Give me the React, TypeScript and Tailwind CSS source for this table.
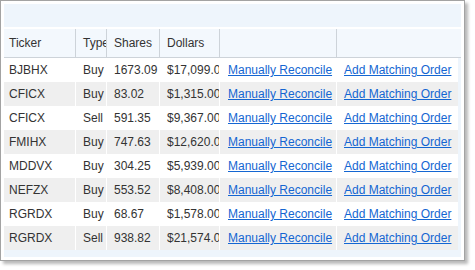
const rows = [
  { ticker: 'BJBHX', type: 'Buy', shares: '1673.09', dollars: '$17,099.00' },
  { ticker: 'CFICX', type: 'Buy', shares: '83.02', dollars: '$1,315.00' },
  { ticker: 'CFICX', type: 'Sell', shares: '591.35', dollars: '$9,367.00' },
  { ticker: 'FMIHX', type: 'Buy', shares: '747.63', dollars: '$12,620.00' },
  { ticker: 'MDDVX', type: 'Buy', shares: '304.25', dollars: '$5,939.00' },
  { ticker: 'NEFZX', type: 'Buy', shares: '553.52', dollars: '$8,408.00' },
  { ticker: 'RGRDX', type: 'Buy', shares: '68.67', dollars: '$1,578.00' },
  { ticker: 'RGRDX', type: 'Sell', shares: '938.82', dollars: '$21,574.00' },
]

const App = () => {
  return (
    <div className="w-[475px] h-[270px] bg-white font-['Liberation_Sans',Arial,sans-serif] text-[12px] text-[#333]">
      <div className="w-[465px] h-[261px] border border-[#a3a3a3] bg-white p-[3px] shadow-[3px_3px_3px_rgba(0,0,0,0.28)]">
        <div className="h-full bg-[#eef5fc] flex flex-col">
          <div className="h-[25px] border-b-2 border-white shrink-0"></div>

          <div className="flex h-[29px] bg-[#f3f8fd] border-b border-[#cdd3d9] shrink-0">
            <div className="w-[72px] pl-[5px] border-r border-[#cdd3d9] flex items-center">Ticker</div>
            <div className="w-[31px] pl-[7px] border-r border-[#cdd3d9] flex items-center overflow-hidden whitespace-nowrap">Type</div>
            <div className="w-[53px] pl-[7px] border-r border-[#cdd3d9] flex items-center">Shares</div>
            <div className="w-[60px] pl-[7px] border-r border-[#cdd3d9] flex items-center">Dollars</div>
            <div className="w-[117px] border-r border-[#cdd3d9]"></div>
            <div className="flex-1"></div>
          </div>

          <div className="flex flex-col w-[454px]">
            {rows.map((r, i) => (
              <div key={i} className={`flex h-[24px] ${i % 2 === 1 ? 'bg-[#efefef]' : 'bg-white'}`}>
                <div className="w-[72px] pl-[5px] border-r border-white flex items-center">{r.ticker}</div>
                <div className="w-[31px] pl-[7px] border-r border-white flex items-center overflow-hidden whitespace-nowrap">{r.type}</div>
                <div className="w-[53px] pl-[7px] border-r border-white flex items-center">{r.shares}</div>
                <div className="w-[60px] pl-[7px] border-r border-white flex items-center overflow-hidden whitespace-nowrap">{r.dollars}</div>
                <div className="w-[117px] pl-[8px] border-r border-white flex items-center whitespace-nowrap">
                  <a href="#" className="text-[#1466d2] underline">Manually Reconcile</a>
                </div>
                <div className="flex-1 pl-[7px] flex items-center whitespace-nowrap">
                  <a href="#" className="text-[#1466d2] underline">Add Matching Order</a>
                </div>
              </div>
            ))}
          </div>
        </div>
      </div>
    </div>
  )
}

export default App
